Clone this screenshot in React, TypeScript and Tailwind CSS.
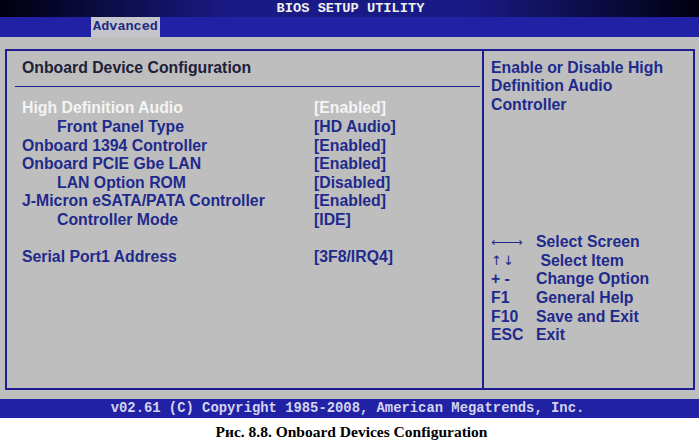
import React from "react";

const rows = [
  { label: "High Definition Audio", value: "[Enabled]", indent: false, active: true },
  { label: "Front Panel Type", value: "[HD Audio]", indent: true },
  { label: "Onboard 1394 Controller", value: "[Enabled]", indent: false },
  { label: "Onboard PCIE Gbe LAN", value: "[Enabled]", indent: false },
  { label: "LAN Option ROM", value: "[Disabled]", indent: true },
  { label: "J-Micron eSATA/PATA Controller", value: "[Enabled]", indent: false },
  { label: "Controller Mode", value: "[IDE]", indent: true },
  { label: "", value: "", indent: false },
  { label: "Serial Port1 Address", value: "[3F8/IRQ4]", indent: false },
];

const keys = [
  { key: "⟵⟶", desc: "Select Screen", cls: "font-normal text-[12px] tracking-[-3px] font-['DejaVu_Sans',sans-serif]" },
  { key: "↑↓", desc: " Select Item", cls: "font-normal text-[13px] tracking-[1px] font-['DejaVu_Sans',sans-serif]" },
  { key: "+ -", desc: "Change Option", cls: "" },
  { key: "F1", desc: "General Help", cls: "" },
  { key: "F10", desc: "Save and Exit", cls: "" },
  { key: "ESC", desc: "Exit", cls: "" },
];

const App: React.FC = () => {
  return (
    <div className="w-[699px] h-[440px] overflow-hidden bg-white flex flex-col">
      {/* title bar */}
      <div className="h-[17px] shrink-0 flex items-center justify-center bg-[linear-gradient(to_right,#00000f_0%,#1a1a86_33%,#1a1a86_67%,#00000f_100%)]">
        <span className="font-['Liberation_Mono',monospace] font-bold text-[13.7px] leading-none text-[#f0f0f0] pl-[2px]">
          BIOS SETUP UTILITY
        </span>
      </div>

      {/* menu bar */}
      <div className="h-[20px] shrink-0 bg-[#2121a6] flex pl-[91px]">
        <div className="w-[69px] h-full bg-[#c4c4cc] flex items-center justify-center">
          <span className="font-['Liberation_Mono',monospace] font-bold text-[13.5px] leading-none text-[#1e2a80]">
            Advanced
          </span>
        </div>
      </div>

      {/* body */}
      <div className="h-[362px] shrink-0 bg-[#bebebe] pt-[12px] pl-[5px] pr-[4px] font-['Liberation_Sans',Arial,sans-serif] font-bold text-[15.8px]">
        <div className="h-[341px] border-2 border-[#1e1e90] flex">
          {/* left */}
          <div className="w-[475px] shrink-0 flex flex-col">
            <div className="pt-[8px] pl-[15px] leading-[18px] text-[#202038]">
              Onboard Device Configuration
            </div>
            <div className="ml-[8px] mr-[2px] mt-[9px] h-px bg-[#1e1e90]" />
            <div className="pt-[12px] pl-[15px]">
              {rows.map((r, i) => (
                <div key={i} className="flex h-[18.6px] items-center leading-none">
                  <div className={`w-[292px] ${r.indent ? "pl-[35px]" : ""} ${r.active ? "text-[#f4f4f4]" : "text-[#1e2a8c]"}`}>
                    {r.label}
                  </div>
                  <div className={r.active ? "text-[#f4f4f4]" : "text-[#1e2a8c]"}>{r.value}</div>
                </div>
              ))}
            </div>
          </div>
          <div className="w-[2px] shrink-0 bg-[#1e1e90]" />
          {/* right */}
          <div className="flex-1 flex flex-col pl-[7px] text-[#1e2a8c]">
            <div className="pt-[8px] leading-[18.3px]">
              Enable or Disable High
              <br />
              Definition Audio
              <br />
              Controller
            </div>
            <div className="mt-[119px]">
              {keys.map((k) => (
                <div key={k.key} className="flex h-[18.6px] items-center leading-none">
                  <div className={`w-[45px] ${k.cls}`}>{k.key}</div>
                  <div className="whitespace-pre">{k.desc}</div>
                </div>
              ))}
            </div>
          </div>
        </div>
      </div>

      {/* footer */}
      <div className="h-[19px] shrink-0 bg-[#2121a6] flex items-center justify-center">
        <span className="font-['Liberation_Mono',monospace] font-bold text-[13.85px] leading-none text-[#d4d4ec] pr-[4px]">
          v02.61 (C) Copyright 1985-2008, American Megatrends, Inc.
        </span>
      </div>

      {/* caption */}
      <div className="flex-1 flex items-center justify-center pt-[5px]">
        <span className="font-['Liberation_Serif',serif] font-bold text-[15.5px] leading-none text-black pl-[4px]">
          Рис. 8.8. Onboard Devices Configuration
        </span>
      </div>
    </div>
  );
};

export default App;
